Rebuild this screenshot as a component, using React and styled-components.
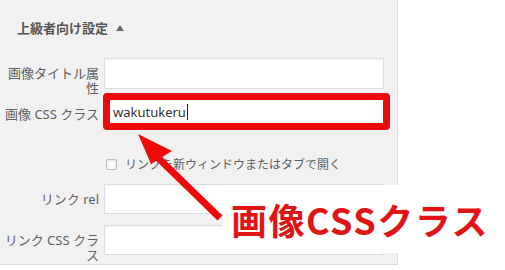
import React from 'react';
import styled, { createGlobalStyle } from 'styled-components';

const GlobalStyle = createGlobalStyle`
  html, body {
    margin: 0;
    padding: 0;
    background: #fff;
  }
  body {
    font-family: "Noto Sans", "Noto Sans CJK JP", sans-serif;
  }
`;

const Page = styled.div`
  position: relative;
  width: 505px;
  height: 270px;
  overflow: hidden;
  background: #fff;
`;

const Panel = styled.div`
  box-sizing: border-box;
  width: 398px;
  height: 265px;
  padding-top: 19px;
  background: #f1f1f1;
  border-right: 1px solid #dcdcdc;
  border-bottom: 1px solid #dcdcdc;
  display: flex;
  flex-direction: column;
`;

const Heading = styled.div`
  padding-left: 17px;
  font-size: 13px;
  line-height: 18px;
  font-weight: 600;
  color: #555;
  display: flex;
  align-items: center;
  gap: 8px;
`;

const Caret = styled.span`
  width: 0;
  height: 0;
  border-left: 4px solid transparent;
  border-right: 4px solid transparent;
  border-bottom: 6px solid #666;
`;

const Row = styled.div`
  display: grid;
  grid-template-columns: 99px 280px;
  grid-template-rows: ${p => p.$h}px;
  column-gap: 5px;
  margin-top: ${p => p.$top}px;
`;

const Label = styled.label`
  font-size: 13px;
  line-height: 15px;
  color: #606060;
  text-align: right;
  padding-top: ${p => p.$pad}px;
  white-space: normal;
  word-break: break-all;
`;

const Field = styled.div`
  box-sizing: border-box;
  background: #fff;
  border: 1px solid #ddd;
  box-shadow: inset 0 1px 2px rgba(0, 0, 0, 0.05);
`;

const Highlight = styled.div`
  box-sizing: border-box;
  margin-left: -1px;
  width: 287px;
  height: 37px;
  border: 7px solid #ee0a0a;
  border-radius: 4px;
  background: #fff;
  display: flex;
  align-items: center;
  padding-left: 3px;
  font-size: 13px;
  color: #333;
`;

const Cursor = styled.span`
  display: inline-block;
  width: 1px;
  height: 16px;
  background: #222;
  margin-left: 1px;
`;

const CheckRow = styled.div`
  margin-top: 29px;
  margin-left: 106px;
  display: flex;
  align-items: center;
  gap: 8px;
  font-size: 12px;
  line-height: 11px;
  color: #606060;
`;

const Box = styled.span`
  box-sizing: border-box;
  width: 11px;
  height: 11px;
  border: 1px solid #b4b9be;
  border-radius: 2px;
  background: #fafafa;
  box-shadow: inset 0 1px 2px rgba(0, 0, 0, 0.1);
`;

const Callout = styled.div`
  position: absolute;
  left: 223px;
  top: 185px;
  width: 275px;
  height: 68px;
  background: #fff;
  display: flex;
  align-items: center;
  padding-left: 8px;
  box-sizing: border-box;
  font-family: "Noto Sans CJK JP", sans-serif;
  font-weight: 700;
  font-size: 36px;
  color: #e01414;
  letter-spacing: 1.5px;
`;

const Arrow = styled.svg`
  position: absolute;
  left: 0;
  top: 0;
  pointer-events: none;
`;

export default function App() {
  return (
    <Page>
      <GlobalStyle />
      <Panel>
        <Heading>
          上級者向け設定 <Caret />
        </Heading>
        <Row $top={21} $h={31}>
          <Label $pad={8}>画像タイトル属性</Label>
          <Field />
        </Row>
        <Row $top={4} $h={37}>
          <Label $pad={14}>画像 CSS クラス</Label>
          <Highlight>
            wakutukeru<Cursor />
          </Highlight>
        </Row>
        <CheckRow>
          <Box />
          リンクを新ウィンドウまたはタブで開く
        </CheckRow>
        <Row $top={14} $h={30}>
          <Label $pad={8}>リンク rel</Label>
          <Field />
        </Row>
        <Row $top={11} $h={30}>
          <Label $pad={8}>リンク CSS クラス</Label>
          <Field />
        </Row>
      </Panel>
      <Arrow width="505" height="270" viewBox="0 0 505 270">
        <line x1="220" y1="218" x2="150" y2="150" stroke="#ee0a0a" strokeWidth="7" />
        <polygon points="138,134 172,151 151,164" fill="#ee0a0a" />
      </Arrow>
      <Callout>画像CSSクラス</Callout>
    </Page>
  );
}
